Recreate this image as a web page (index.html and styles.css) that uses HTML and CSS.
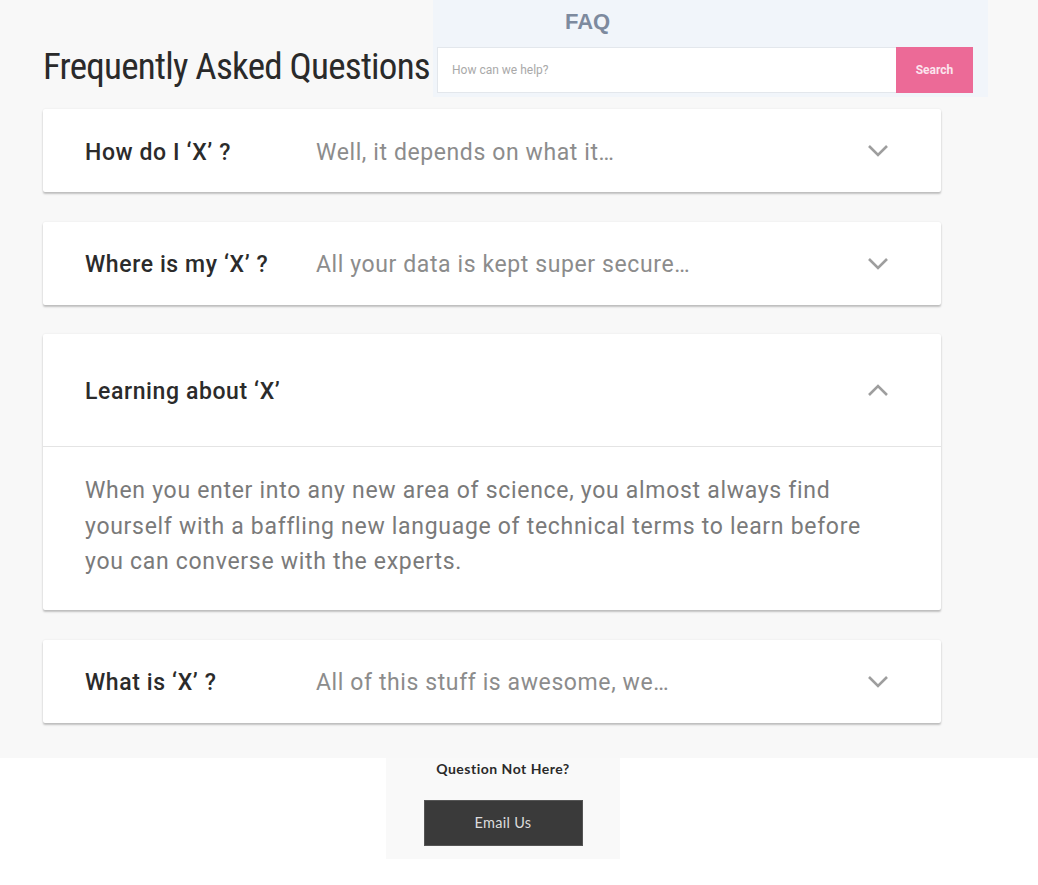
FILE: index.html
```html
<!DOCTYPE html>
<html>
<head>
<meta charset="utf-8">
<link rel="stylesheet" href="styles.css">
</head>
<body>
<div class="top">
  <header class="header">
    <h1 class="title">Frequently Asked Questions</h1>
    <div class="panel">
      <div class="panel-title">FAQ</div>
      <form class="search">
        <input class="search-input" type="text" placeholder="How can we help?">
        <button class="search-btn" type="button">Search</button>
      </form>
    </div>
  </header>

  <main class="list">
    <section class="card">
      <div class="card-head">
        <div class="q">How do I ‘X’ ?</div>
        <div class="a">Well, it depends on what it…</div>
        <svg class="chev" width="22" height="13" viewBox="0 0 22 13"><polyline points="2,2 11,11 20,2" fill="none" stroke="#9e9e9e" stroke-width="2.6"/></svg>
      </div>
    </section>
    <section class="card">
      <div class="card-head">
        <div class="q">Where is my ‘X’ ?</div>
        <div class="a">All your data is kept super secure…</div>
        <svg class="chev" width="22" height="13" viewBox="0 0 22 13"><polyline points="2,2 11,11 20,2" fill="none" stroke="#9e9e9e" stroke-width="2.6"/></svg>
      </div>
    </section>
    <section class="card open">
      <div class="card-head tall">
        <div class="q">Learning about ‘X’</div>
        <div class="a"></div>
        <svg class="chev" width="22" height="13" viewBox="0 0 22 13"><polyline points="2,11 11,2 20,11" fill="none" stroke="#9e9e9e" stroke-width="2.6"/></svg>
      </div>
      <div class="card-body">When you enter into any new area of science, you almost always find yourself with a baffling new language of technical terms to learn before you can converse with the experts.</div>
    </section>
    <section class="card">
      <div class="card-head">
        <div class="q">What is ‘X’ ?</div>
        <div class="a">All of this stuff is awesome, we…</div>
        <svg class="chev" width="22" height="13" viewBox="0 0 22 13"><polyline points="2,2 11,11 20,2" fill="none" stroke="#9e9e9e" stroke-width="2.6"/></svg>
      </div>
    </section>
  </main>
</div>

<footer class="footer">
  <div class="contact">
    <div class="contact-title">Question Not Here?</div>
    <button class="email-btn" type="button">Email Us</button>
  </div>
</footer>
</body>
</html>
```

FILE: styles.css
```css
* { box-sizing: border-box; }

html, body {
  margin: 0;
  padding: 0;
}

body {
  background: #ffffff;
  font-family: Roboto, "Liberation Sans", Arial, sans-serif;
  color: #333;
}

.top {
  background: #f8f8f8;
  padding: 0 0 35px 43px;
}

.header {
  display: flex;
  align-items: flex-start;
}

.title {
  margin: 47px 0 0 0;
  font-family: Roboto, "Liberation Sans", sans-serif;
  font-weight: 400;
  font-size: 37px;
  line-height: 40px;
  color: #2a2a2a;
  font-stretch: 75%;
  width: 390px;
  white-space: nowrap;
  letter-spacing: -0.75px;
}

.panel {
  width: 555px;
  height: 97px;
  background: #f1f5fa;
  padding: 9px 15px 0 4px;
}

.panel-title {
  font-family: "Liberation Sans", Arial, sans-serif;
  font-weight: 700;
  font-size: 22px;
  line-height: 26px;
  color: #7d8a9e;
  padding-left: 128px;
  height: 38px;
}

.search {
  display: flex;
  height: 46px;
  margin: 0;
}

.search-input {
  flex: 1;
  border: 1px solid #e3e7ec;
  border-right: none;
  background: #fff;
  padding: 0 14px;
  font-family: Roboto, sans-serif;
  font-size: 12px;
  color: #555;
  outline: none;
}

.search-input::placeholder {
  color: #a9a9a9;
}

.search-btn {
  width: 77px;
  border: none;
  background: #ec6a97;
  color: #fbe5ee;
  font-family: Roboto, sans-serif;
  font-weight: 700;
  font-size: 12px;
  padding: 0;
}

.list {
  width: 898px;
  margin-top: 12px;
  display: flex;
  flex-direction: column;
  gap: 29.5px;
}

.card {
  background: #fff;
  border-radius: 2px;
  box-shadow: 0 2px 2px rgba(0,0,0,0.22), 0 0 2px rgba(0,0,0,0.08);
}

.card-head {
  display: flex;
  align-items: center;
  height: 83px;
  padding: 3px 52px 0 42px;
}

.card-head .chev {
  margin-top: -3px;
}

.card-head.tall {
  height: 113px;
  border-bottom: 1px solid #e4e4e4;
}

.q {
  width: 231px;
  flex: none;
  font-size: 23px;
  letter-spacing: 0.6px;
  font-weight: 500;
  color: #2b2b2b;
}

.a {
  flex: 1;
  font-size: 23px;
  letter-spacing: 0.6px;
  font-weight: 400;
  color: #8c8c8c;
}

.chev {
  flex: none;
  display: block;
}

.card-body {
  padding: 26px 42px 30.5px 42px;
  font-size: 23px;
  letter-spacing: 0.7px;
  line-height: 35.5px;
  color: #7a7a7a;
}

.footer {
  background: #fff;
  padding-left: 386px;
  height: 128px;
}

.contact {
  width: 234px;
  height: 101px;
  background: #f9f9f9;
  padding-top: 2px;
  display: flex;
  flex-direction: column;
  align-items: center;
}

.contact-title {
  font-family: Lato, "Open Sans", sans-serif;
  font-weight: 700;
  font-size: 14px;
  letter-spacing: 0.5px;
  line-height: 18px;
  color: #2a2a2a;
}

.email-btn {
  margin-top: 22px;
  width: 159px;
  height: 46px;
  border: 1px solid #555;
  background: #3a3a3a;
  color: #dcdcdc;
  font-family: Lato, "Open Sans", sans-serif;
  font-size: 14.5px;
  letter-spacing: 0.3px;
  padding: 0;
}
```
